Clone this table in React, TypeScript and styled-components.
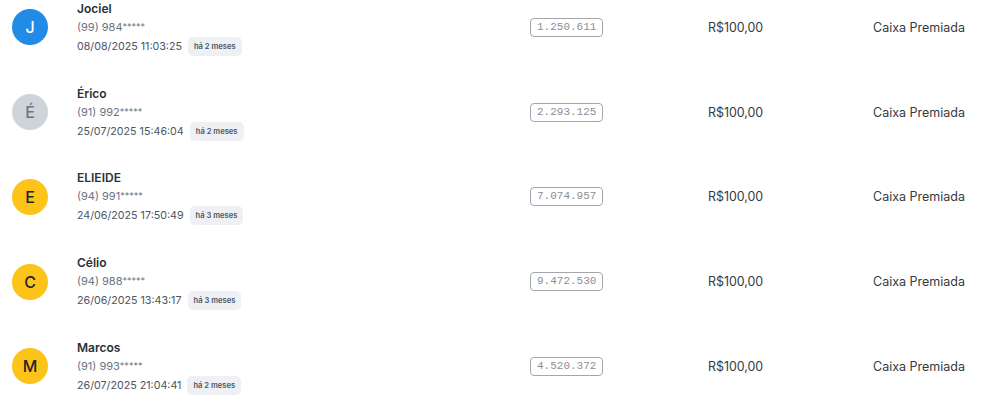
import React from "react";
import styled, { createGlobalStyle } from "styled-components";

const Global = createGlobalStyle`
  html, body { margin: 0; padding: 0; background: #ffffff; }
  body { font-family: Inter, "Noto Sans", sans-serif; overflow: hidden; }
`;

const List = styled.div`
  width: 1001px;
  margin-top: -15px;
  display: flex;
  flex-direction: column;
`;

const Row = styled.div`
  height: 84.75px;
  display: grid;
  grid-template-columns: 530px 178px 165px 128px;
  align-items: center;
`;

const Person = styled.div`
  display: flex;
  align-items: center;
  padding-left: 12px;
  gap: 29px;
`;

const Avatar = styled.div<{ $bg: string; $fg: string }>`
  width: 36px;
  height: 36px;
  border-radius: 50%;
  background: ${(p) => p.$bg};
  color: ${(p) => p.$fg};
  display: flex;
  align-items: center;
  justify-content: center;
  font-size: 16px;
  font-weight: 500;
  flex-shrink: 0;
`;

const Info = styled.div`
  display: flex;
  flex-direction: column;
`;

const Name = styled.div`
  font-size: 12px;
  font-weight: 600;
  color: #2b3036;
  line-height: 19px;
  padding-top: 1px;
`;

const Phone = styled.div`
  font-size: 11px;
  color: #6b7280;
  line-height: 17px;
`;

const Stars = styled.span`
  font-size: 9px;
  vertical-align: 1px;
`;

const DateLine = styled.div`
  display: flex;
  align-items: center;
  gap: 6px;
  font-size: 10.7px;
  color: #4b5563;
  line-height: 21px;
`;

const Badge = styled.span`
  display: inline-flex;
  align-items: center;
  height: 19px;
  padding: 0 6px;
  border-radius: 5px;
  background: #eef0f3;
  color: #4b5563;
  font-size: 7.6px;
  font-weight: 600;
`;

const CodeCell = styled.div`
  display: flex;
`;

const Code = styled.span`
  display: inline-block;
  font-family: "Liberation Mono", "DejaVu Sans Mono", monospace;
  font-size: 11px;
  line-height: 17px;
  color: #8a8f96;
  border: 1px solid #a3a7ad;
  border-radius: 4px;
  padding: 0 6px;
`;

const Amount = styled.div`
  font-size: 12.4px;
  color: #343a40;
`;

const Prize = styled.div`
  font-size: 12.5px;
  color: #343a40;
`;

type Entry = {
  letter: string;
  name: string;
  phone: string;
  date: string;
  ago: string;
  code: string;
  bg: string;
  fg: string;
};

const blue = { bg: "#228be6", fg: "#ffffff" };
const gray = { bg: "#ced4da", fg: "#6c757d" };
const yellow = { bg: "#fcc419", fg: "#212529" };

const entries: Entry[] = [
  { letter: "J", name: "Jociel", phone: "(99) 984", date: "08/08/2025 11:03:25", ago: "há 2 meses", code: "1.250.611", ...blue },
  { letter: "É", name: "Érico", phone: "(91) 992", date: "25/07/2025 15:46:04", ago: "há 2 meses", code: "2.293.125", ...gray },
  { letter: "E", name: "ELIEIDE", phone: "(94) 991", date: "24/06/2025 17:50:49", ago: "há 3 meses", code: "7.074.957", ...yellow },
  { letter: "C", name: "Célio", phone: "(94) 988", date: "26/06/2025 13:43:17", ago: "há 3 meses", code: "9.472.530", ...yellow },
  { letter: "M", name: "Marcos", phone: "(91) 993", date: "26/07/2025 21:04:41", ago: "há 2 meses", code: "4.520.372", ...yellow },
];

export default function App() {
  return (
    <>
      <Global />
      <List>
        {entries.map((e) => (
          <Row key={e.code}>
            <Person>
              <Avatar $bg={e.bg} $fg={e.fg}>{e.letter}</Avatar>
              <Info>
                <Name>{e.name}</Name>
                <Phone>
                  {e.phone}
                  <Stars>*****</Stars>
                </Phone>
                <DateLine>
                  {e.date}
                  <Badge>{e.ago}</Badge>
                </DateLine>
              </Info>
            </Person>
            <CodeCell>
              <Code>{e.code}</Code>
            </CodeCell>
            <Amount>R$100,00</Amount>
            <Prize>Caixa Premiada</Prize>
          </Row>
        ))}
      </List>
    </>
  );
}
